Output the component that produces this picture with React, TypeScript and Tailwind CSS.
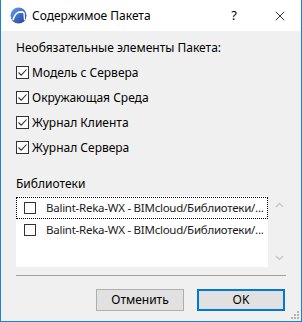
import { X } from "lucide-react"

const options = ["Модель с Сервера", "Окружающая Среда", "Журнал Клиента", "Журнал Сервера"]
const libraries = [
  "Balint-Reka-WX - BIMcloud/Библиотеки/...",
  "Balint-Reka-WX - BIMcloud/Библиотеки/...",
]

function Check() {
  return (
    <span className="flex h-[13px] w-[13px] items-center justify-center border border-[#333] bg-white">
      <svg width="11" height="11" viewBox="0 0 11 11">
        <path d="M1.5 5.5 L4.2 8.2 L9.5 2.5" fill="none" stroke="#333" strokeWidth="1.1" />
      </svg>
    </span>
  )
}

function AppIcon() {
  return (
    <svg width="17" height="17" viewBox="0 0 17 17">
      <defs>
        <linearGradient id="g" x1="0" y1="0" x2="1" y2="1">
          <stop offset="0" stopColor="#6aa0f0" />
          <stop offset="1" stopColor="#1a3d9a" />
        </linearGradient>
      </defs>
      <circle cx="8.5" cy="8.5" r="8" fill="url(#g)" />
      <path d="M3 13 C5 6 9 3.5 14 5.5" fill="none" stroke="white" strokeWidth="1.6" />
      <path d="M14 5.5 L14.5 13" fill="none" stroke="white" strokeWidth="1.4" />
    </svg>
  )
}

export default function App() {
  return (
    <div
      className="flex h-[322px] w-[302px] flex-col border-x border-b border-[#1883d7] bg-[#f0f0f0] text-[12px] text-black"
      style={{ fontFamily: '"Noto Sans", "Open Sans", sans-serif' }}
    >
      <div className="flex h-[31px] shrink-0 items-center bg-white pl-[9px]">
        <AppIcon />
        <span className="ml-[5px] text-[12px]">Содержимое Пакета</span>
        <span className="ml-auto mr-[35px] text-[13px]">?</span>
        <X size={16} strokeWidth={1.2} className="mr-[13px]" />
      </div>

      <div className="flex flex-1 flex-col px-[15px]">
        <div className="mt-[8px] leading-[17px]">Необязательные элементы Пакета:</div>
        <div className="mt-[8px] flex flex-col gap-[8px]">
          {options.map((o) => (
            <div key={o} className="flex h-[17px] items-center gap-[3px] leading-[17px]">
              <Check />
              <span>{o}</span>
            </div>
          ))}
        </div>

        <div className="mt-[19px] leading-[17px]">Библиотеки</div>
        <div className="mt-[4px] flex gap-[4px]">
          <div className="h-[71px] w-[254px] bg-white pt-px">
            {libraries.map((l, i) => (
              <div
                key={i}
                className={`flex h-[22px] items-center gap-[10px] overflow-hidden whitespace-nowrap pl-[7px] ${
                  i === 0 ? "border border-dotted border-black" : "border border-transparent"
                }`}
              >
                <span className="h-[12px] w-[12px] shrink-0 border border-[#333] bg-white" />
                <span className="text-[11.5px] tracking-[-0.25px] text-[#1a1a1a]">{l}</span>
              </div>
            ))}
          </div>
          <div className="flex w-[14px] flex-col items-center justify-between py-[6px] text-[#c8c8c8]">
            <svg width="9" height="6" viewBox="0 0 9 6">
              <path d="M1 5 L4.5 1.5 L8 5" fill="none" stroke="currentColor" strokeWidth="1.5" />
            </svg>
            <svg width="9" height="6" viewBox="0 0 9 6">
              <path d="M1 1 L4.5 4.5 L8 1" fill="none" stroke="currentColor" strokeWidth="1.5" />
            </svg>
          </div>
        </div>

        <div className="mt-[8px] h-px w-[270px] bg-[#a0a0a0]" />

        <div className="mt-[13px] flex justify-end gap-[13px] pr-[1px]">
          <button className="h-[22px] w-[88px] border border-[#adadad] bg-[#e1e1e1] text-[12px]">
            Отменить
          </button>
          <button className="h-[22px] w-[88px] border-2 border-[#0078d7] bg-[#e1e1e1] text-[12px]">
            OK
          </button>
        </div>
      </div>
      <div className="relative">
        <div className="absolute bottom-[2px] right-[2px] grid grid-cols-3 gap-px">
          {[0, 0, 1, 0, 1, 1, 1, 1, 1].map((v, i) => (
            <span key={i} className={`h-[2px] w-[2px] ${v ? "bg-[#b5b5b5]" : ""}`} />
          ))}
        </div>
      </div>
    </div>
  )
}
